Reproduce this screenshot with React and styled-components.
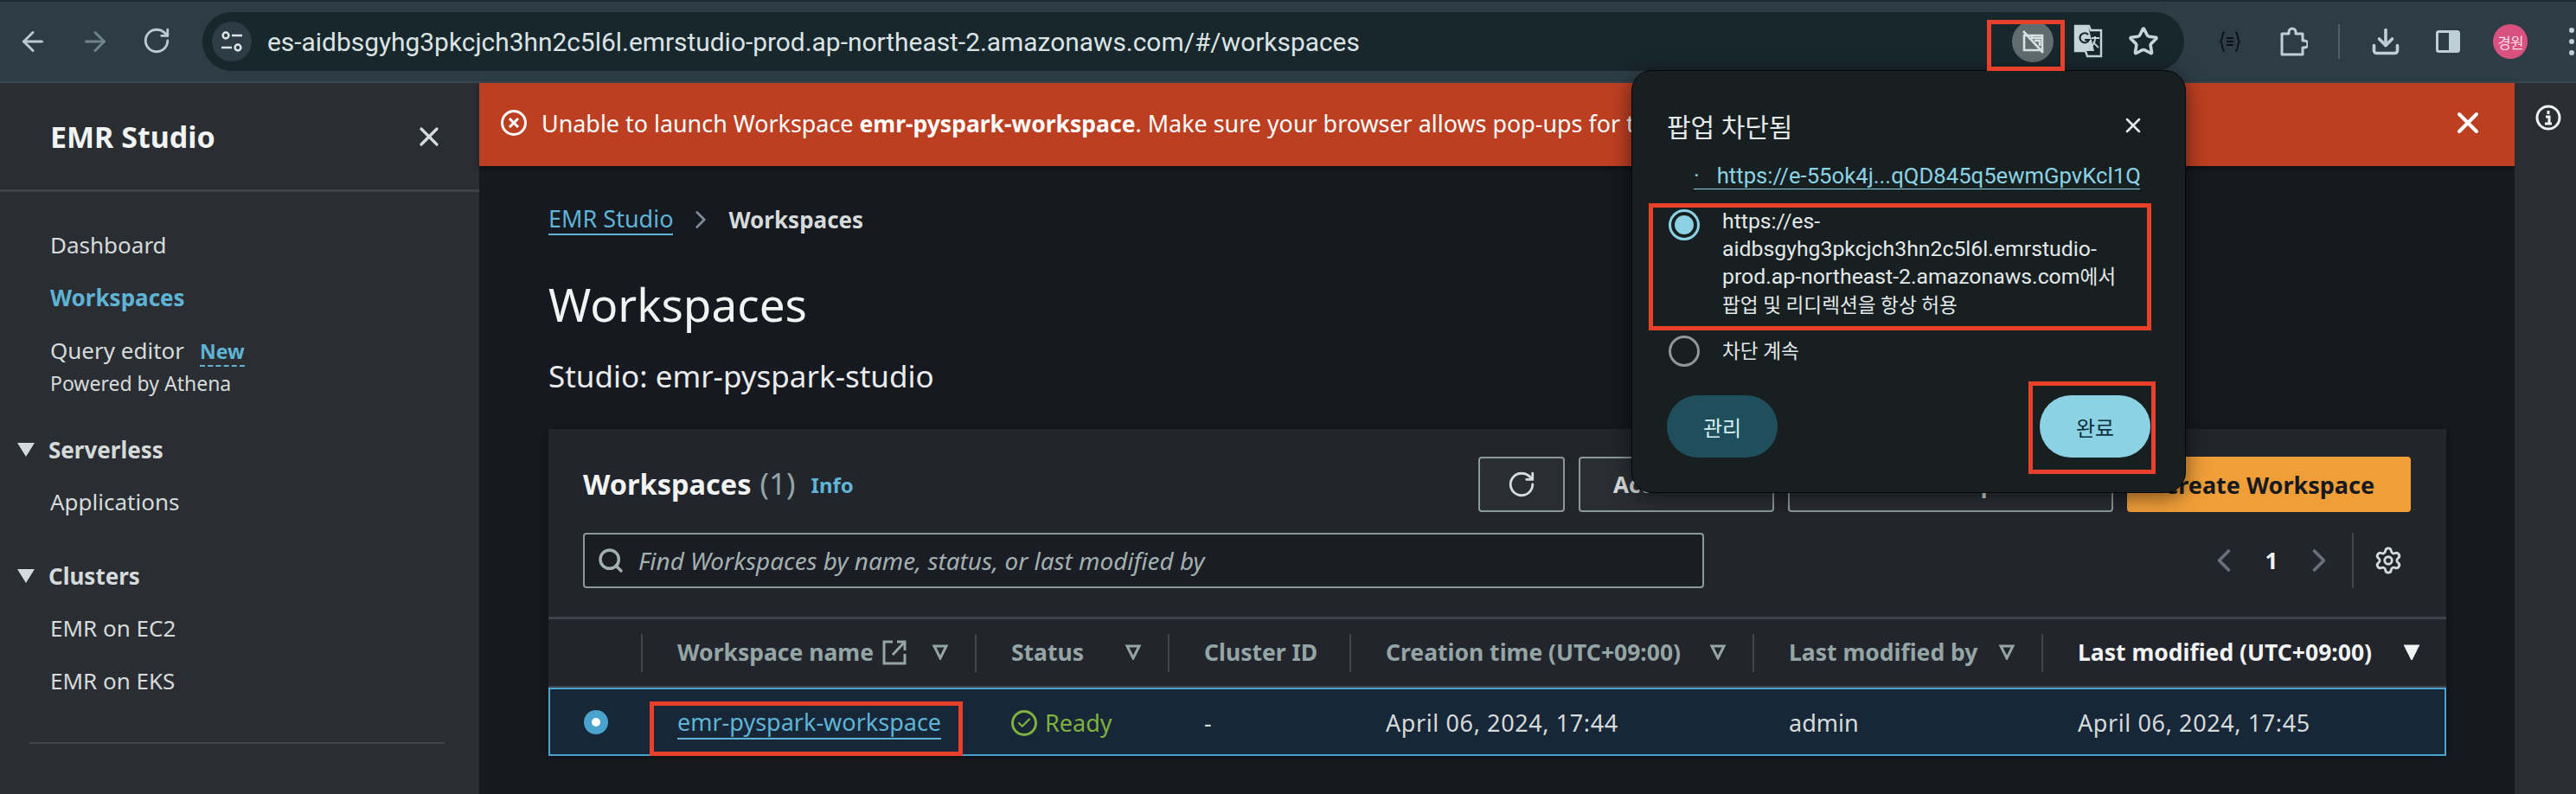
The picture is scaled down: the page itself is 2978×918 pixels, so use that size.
import React from 'react'
import styled, { createGlobalStyle } from 'styled-components'
import { ArrowLeft, ArrowRight, RotateCw, Star, Download, X, Search, Settings, ChevronLeft, ChevronRight, Check } from 'lucide-react'

const GlobalStyle = createGlobalStyle`
  html, body { margin: 0; padding: 0; background: #16191f; }
  * { box-sizing: border-box; }
`

const Page = styled.div`
  position: relative;
  width: 2978px;
  height: 918px;
  overflow: hidden;
  font-family: "Noto Sans", sans-serif;
  font-size: 26px;
  color: #d5dbdb;
`

/* browser chrome */
const BrowserBar = styled.div`
  height: 96px;
  display: flex;
  align-items: center;
  background: #2e3d45;
  border-top: 2px solid #1f2b31;
  border-bottom: 2px solid #3c474d;
  padding-left: 20px;
`
const NavIcons = styled.div`
  flex: none;
  display: flex;
  gap: 36px;
  width: 214px;
`
const NavIcon = styled.span`
  display: flex;
  color: ${p => (p.$dim ? '#70828a' : '#b9cbd0')};
`
const AddressBar = styled.div`
  flex: none;
  width: 2291px;
  height: 68px;
  border-radius: 34px;
  background: #18272c;
  display: flex;
  align-items: center;
  padding-left: 11px;
`
const TuneButton = styled.div`
  flex: none;
  width: 46px;
  height: 46px;
  border-radius: 50%;
  background: #2e3d45;
  display: flex;
  align-items: center;
  justify-content: center;
  color: #dbe5e8;
`
const Url = styled.div`
  flex: none;
  margin-left: 18px;
  width: 2017px;
  font-family: Roboto, sans-serif;
  font-size: 29.9px;
  color: #dbe3e5;
`
const OmniIcons = styled.div`
  flex: none;
  display: flex;
  align-items: center;
  color: #c5d5d9;
`
const BlockedIcon = styled.div`
  width: 48px;
  height: 48px;
  border-radius: 50%;
  background: #5f6c70;
  display: flex;
  align-items: center;
  justify-content: center;
  color: #d6dfe2;
`
const OmniIcon = styled.span`
  display: flex;
  margin-left: ${p => p.$gap}px;
`
const ToolIcons = styled.div`
  flex: none;
  display: flex;
  align-items: center;
  margin-left: 40px;
  color: #bed0d5;
`
const ToolIcon = styled.span`
  display: flex;
  width: ${p => p.$w}px;
  margin-left: ${p => p.$left || 0}px;
  justify-content: center;
`
const ToolDivider = styled.span`
  width: 2px;
  height: 40px;
  background: #4f5f66;
  margin: 0 35px;
`
const Avatar = styled.span`
  width: 40px;
  height: 40px;
  border-radius: 50%;
  background: #d9517f;
  color: #f6dde6;
  font: 17px "Noto Sans CJK KR", sans-serif;
  letter-spacing: -1px;
  display: flex;
  align-items: center;
  justify-content: center;
  margin: 0 48px 0 37px;
`
const Kebab = styled.span`
  display: flex;
  flex-direction: column;
  gap: 7px;
  i { width: 6px; height: 6px; border-radius: 50%; background: #bed0d5; }
`

/* page frame */
const Frame = styled.div`
  display: grid;
  grid-template-columns: 554px 2353px 71px;
  height: 822px;
`
const Sidebar = styled.aside`
  background: #2a2e33;
`
const SideHeader = styled.div`
  height: 126px;
  border-bottom: 3px solid #3f444b;
  display: flex;
  align-items: center;
  justify-content: space-between;
  padding: 0 40px 0 58px;
  margin-bottom: 31px;
`
const SideTitle = styled.div`
  font-size: 34px;
  font-weight: 700;
  color: #f2f3f3;
`
const NavItem = styled.div`
  height: 61px;
  line-height: 61px;
  padding-left: 58px;
  font-weight: ${p => (p.$active ? 700 : 400)};
  color: ${p => (p.$active ? '#5fb4d6' : '#d5dbdb')};
`
const NewTag = styled.span`
  margin-left: 18px;
  font-size: 23px;
  font-weight: 700;
  color: #5fb4d6;
  border-bottom: 2px dashed #5fb4d6;
`
const NavNote = styled.div`
  height: 38px;
  line-height: 38px;
  margin-top: -12px;
  padding-left: 58px;
  font-size: 23px;
  color: #d5dbdb;
`
const NavGroup = styled.div`
  height: 61px;
  margin-top: ${p => p.$top}px;
  display: flex;
  align-items: center;
  gap: 16px;
  padding-left: 20px;
  font-weight: 700;
  color: #d5dbdb;
`
const Caret = styled.span`
  width: 0;
  height: 0;
  border-left: 10px solid transparent;
  border-right: 10px solid transparent;
  border-top: 16px solid #d5dbdb;
`
const SideDivider = styled.div`
  height: 2px;
  margin: 40px 40px 0 34px;
  background: #41464d;
`
const Main = styled.main`
  background: #16191f;
`
const Rail = styled.aside`
  background: #2a2e33;
  padding: 24px 0 0 24px;
  color: #f2f3f3;
`

/* flash banner */
const Banner = styled.div`
  height: 96px;
  background: #bd3f22;
  color: #fff;
  display: flex;
  align-items: center;
  padding: 0 34px 4px 24px;
  white-space: nowrap;
  box-shadow: 0 2px 6px rgba(0, 0, 0, 0.4);
`
const BannerText = styled.div`
  margin-left: 16px;
  flex: 1;
  font-size: 26.9px;
  overflow: hidden;
  b { font-weight: 700; font-size: 26.5px; }
`

const Content = styled.div`
  padding: 42px 79px 0 80px;
`
const Breadcrumbs = styled.div`
  height: 40px;
  display: flex;
  align-items: center;
  gap: 15px;
`
const Crumb = styled.span`
  color: #5fb4d6;
  border-bottom: 2px solid #5fb4d6;
  line-height: 34px;
  font-size: 27px;
`
const CrumbSep = styled.span`
  display: flex;
  color: #7d8998;
`
const CrumbNow = styled.span`
  font-weight: 700;
  color: #d5dbdb;
`
const Heading = styled.h1`
  margin: 43px 0 0;
  height: 70px;
  line-height: 70px;
  font-size: 53px;
  font-weight: 400;
  color: #f2f3f3;
`
const SubHeading = styled.div`
  margin-top: 26px;
  height: 44px;
  line-height: 44px;
  font-size: 35px;
  color: #e9ebed;
`

/* workspaces card */
const Card = styled.section`
  margin-top: 39px;
  background: #22252c;
  box-shadow: 0 2px 8px rgba(0, 0, 0, 0.4);
`
const CardTop = styled.div`
  padding: 32px 41px 33px 40px;
  border-bottom: 3px solid #3e424a;
`
const TitleRow = styled.div`
  height: 64px;
  display: flex;
  align-items: center;
`
const CardTitle = styled.h2`
  margin: 0 0 4px;
  font-size: 32.5px;
  font-weight: 700;
  color: #f2f3f3;
  span { font-weight: 400; font-size: 35px; color: #95a5a6; margin-left: 10px; }
`
const InfoLink = styled.span`
  margin-left: 18px;
  font-size: 24px;
  font-weight: 700;
  color: #5fb4d6;
`
const Actions = styled.div`
  margin-left: auto;
  display: flex;
  gap: 16px;
`
const Button = styled.div`
  width: ${p => p.$w}px;
  height: 64px;
  border: 2px solid #8d9999;
  border-radius: 4px;
  background: #2a2e33;
  color: #d5dbdb;
  font-weight: 700;
  display: flex;
  align-items: center;
  justify-content: ${p => (p.$menu ? 'space-between' : 'center')};
  padding: 0 ${p => (p.$menu ? '38px' : '0')};
`
const PrimaryButton = styled(Button)`
  border: 0;
  background: #f09e38;
  color: #16191f;
  font-size: 27px;
`
const FilterRow = styled.div`
  margin-top: 24px;
  height: 64px;
  display: flex;
  align-items: center;
`
const SearchBox = styled.div`
  width: 1296px;
  height: 64px;
  border: 2px solid #8d9999;
  border-radius: 4px;
  background: #1a1d24;
  display: flex;
  align-items: center;
  gap: 16px;
  padding-left: 14px;
  color: #a3b0b0;
  font-style: italic;
  font-size: 27.9px;
`
const Pager = styled.div`
  margin-left: auto;
  height: 64px;
  display: flex;
  align-items: center;
  color: #687078;
`
const PageNumber = styled.span`
  width: 66px;
  text-align: center;
  font-weight: 700;
  color: #f2f3f3;
`
const PagerDivider = styled.span`
  width: 2px;
  height: 64px;
  margin: 0 23px 0 16px;
  background: #41464d;
`
const GearIcon = styled.span`
  display: flex;
  margin-right: 9px;
  color: #d5dbdb;
`

const COLUMNS = '107px 386px 223px 210px 466px 334px 468px'

const HeadRow = styled.div`
  display: grid;
  grid-template-columns: ${COLUMNS};
  height: 79px;
  align-items: center;
  border-bottom: 2px solid #3e424a;
`
const HeadCell = styled.div`
  height: 44px;
  display: flex;
  align-items: center;
  padding: 0 30px 2px 40px;
  border-left: ${p => (p.$first ? '0' : '2px solid #41464d')};
  font-weight: 700;
  font-size: 26.5px;
  white-space: nowrap;
  color: ${p => (p.$active ? '#f2f3f3' : '#95a5a6')};
`
const SortIcon = styled.svg`
  flex: none;
  margin-left: auto;
  width: 20px;
  height: 18px;
`
const ExternalWrap = styled.span`
  display: flex;
  margin-left: 10px;
  color: #95a5a6;
`
const Row = styled.div`
  display: grid;
  grid-template-columns: ${COLUMNS};
  height: 79px;
  align-items: center;
  background: #182738;
  border: 2px solid #4aa3cc;
`
const Cell = styled.div`
  padding: 2px 0 0 40px;
  display: flex;
  align-items: center;
  color: #d5dbdb;
  font-size: 27px;
  white-space: nowrap;
  letter-spacing: ${p => (p.$date ? '0.6px' : '0')};
`
const RowRadio = styled.span`
  width: 28px;
  height: 28px;
  margin-left: 39px;
  border-radius: 50%;
  background: #4aa3cc;
  display: flex;
  align-items: center;
  justify-content: center;
  &::after { content: ''; width: 10px; height: 10px; border-radius: 50%; background: #fff; }
`
const WorkspaceLink = styled.span`
  color: #5fb4d6;
  border-bottom: 2px solid #5fb4d6;
  line-height: 36px;
`
const StatusOk = styled.span`
  display: flex;
  align-items: center;
  gap: 9px;
  color: #7fb23d;
`
const StatusRing = styled.span`
  width: 30px;
  height: 30px;
  border: 3px solid #7fb23d;
  border-radius: 50%;
  display: flex;
  align-items: center;
  justify-content: center;
`

/* popup bubble */
const Popup = styled.div`
  position: absolute;
  left: 1886px;
  top: 81px;
  width: 641px;
  height: 489px;
  border: 1px solid #050808;
  border-radius: 24px;
  background: #181f20;
  box-shadow: 0 4px 24px rgba(0, 0, 0, 0.55);
  padding: 42px 40px 0;
  font-family: Roboto, "Noto Sans CJK KR", sans-serif;
  color: #e3e8ea;
`
const PopupHead = styled.div`
  height: 42px;
  display: flex;
  align-items: center;
  justify-content: space-between;
  padding-right: 6px;
`
const PopupTitle = styled.div`
  font-size: 30px;
`
const PopupLink = styled.div`
  margin: 20px 12px 0 31px;
  height: 33px;
  line-height: 34px;
  border-bottom: 1px solid #8bd2e4;
  color: #8bd2e4;
  font-size: 25.7px;
  white-space: nowrap;
  overflow: hidden;
  &::before { content: '·'; margin-right: 20px; }
`
const Option = styled.div`
  display: flex;
  align-items: ${p => (p.$center ? 'center' : 'flex-start')};
  font-size: 24.8px;
  line-height: 32px;
  margin-top: ${p => p.$top}px;
  padding-left: 2px;
  width: 580px;
`
const OptionText = styled.div`
  margin-left: 26px;
`
const Hangul = styled.span`
  font-size: 22.6px;
`
const Radio = styled.span`
  flex: none;
  width: 36px;
  height: 36px;
  border-radius: 50%;
  border: 3px solid ${p => (p.$on ? '#8bd2e4' : '#8f9799')};
  margin-top: ${p => (p.$on ? '2px' : '0')};
  display: flex;
  align-items: center;
  justify-content: center;
  &::after {
    content: '';
    width: 22px;
    height: 22px;
    border-radius: 50%;
    background: ${p => (p.$on ? '#8bd2e4' : 'transparent')};
  }
`
const PopupActions = styled.div`
  margin-top: 33px;
  display: flex;
  justify-content: space-between;
`
const PillButton = styled.div`
  width: 128px;
  height: 72px;
  border-radius: 36px;
  background: ${p => (p.$primary ? '#8bd2e4' : '#1f4f5c')};
  color: ${p => (p.$primary ? '#10303a' : '#d9eef3')};
  font-size: 24px;
  display: flex;
  align-items: center;
  justify-content: center;
`

/* red annotation rectangles drawn over the shot */
const Callout = styled.div`
  position: absolute;
  left: ${p => p.$x}px;
  top: ${p => p.$y}px;
  width: ${p => p.$w}px;
  height: ${p => p.$h}px;
  border: 5px solid #e8402a;
  pointer-events: none;
`

const TuneIcon = () => (
  <svg width="28" height="28" viewBox="0 0 28 28" fill="none" stroke="currentColor" strokeWidth="2.5">
    <circle cx="7" cy="7" r="3.4" />
    <path d="M14 7h12M2 21h12" />
    <circle cx="21" cy="21" r="3.4" />
  </svg>
)

const PopupBlockedIcon = () => (
  <svg width="30" height="30" viewBox="0 0 30 30" fill="none" stroke="currentColor" strokeWidth="2.6">
    <path d="M5 8h21v17H5zM14 8v3h12M17 14h6v6" />
    <path d="M4 3l23 25" />
  </svg>
)

const TranslateIcon = () => (
  <svg width="36" height="40" viewBox="0 0 36 40">
    <path d="M3 2h16l2 5h12v30H17l-2-6H3z" fill="none" stroke="#c5d5d9" strokeWidth="2.4" />
    <path d="M3 2h15l7 29H3z" fill="#c5d5d9" />
    <path d="M18 12a5.5 5.5 0 1 0 1 6h-5" fill="none" stroke="#18272c" strokeWidth="2.2" />
    <path d="M22 16h9M26 14v2c0 5-3 9-6 11M24 20c1 3 4 5 6 7" fill="none" stroke="#c5d5d9" strokeWidth="1.8" />
  </svg>
)

const DevIcon = () => (
  <svg width="26" height="28" viewBox="0 0 26 28" fill="none" stroke="#0d1417" strokeWidth="2">
    <path d="M7 3C3 3 5 12 2 14c3 2 1 11 5 11M19 3c4 0 2 9 5 11-3 2-1 11-5 11M9 10h8M9 14h8M9 18h8" />
  </svg>
)

const PuzzleIcon = () => (
  <svg width="36" height="36" viewBox="0 0 36 36" fill="none" stroke="currentColor" strokeWidth="3" strokeLinejoin="round">
    <path d="M6 9h8V7a4 4 0 0 1 8 0v2h8v8h2a4 4 0 0 1 0 8h-2v8H6z" />
  </svg>
)

const PanelIcon = () => (
  <svg width="30" height="30" viewBox="0 0 30 30">
    <rect x="2.5" y="3.5" width="25" height="23" rx="2" fill="none" stroke="currentColor" strokeWidth="3" />
    <rect x="16" y="3.5" width="11.5" height="23" fill="currentColor" />
  </svg>
)

const ErrorIcon = () => (
  <svg width="32" height="32" viewBox="0 0 32 32" fill="none" stroke="#fff" strokeWidth="3">
    <circle cx="16" cy="16" r="13.5" />
    <path d="M11 11l10 10M21 11L11 21" />
  </svg>
)

const InfoIcon = () => (
  <svg width="30" height="32" viewBox="0 0 30 32" fill="none" stroke="currentColor" strokeWidth="3">
    <circle cx="15" cy="16" r="13" />
    <path d="M15 8v4M12 15h4v8M11 23h8" />
  </svg>
)

const ExternalIcon = () => (
  <svg width="28" height="30" viewBox="0 0 28 30" fill="none" stroke="currentColor" strokeWidth="3">
    <path d="M12 3H2v25h24V17M17 3h9v10M26 3L12 18" />
  </svg>
)

const SortArrow = ({ active }) => (
  <SortIcon viewBox="0 0 20 18" fill={active ? 'currentColor' : 'none'} stroke="currentColor" strokeWidth="3">
    <path d="M3 2h14l-7 14z" />
  </SortIcon>
)

const columns = [
  { label: 'Workspace name', external: true, sort: true },
  { label: 'Status', sort: true },
  { label: 'Cluster ID' },
  { label: 'Creation time (UTC+09:00)', sort: true },
  { label: 'Last modified by', sort: true },
  { label: 'Last modified (UTC+09:00)', sort: true, active: true },
]

const App = () => {
  return (
    <Page>
      <GlobalStyle />
      <BrowserBar>
        <NavIcons>
          <NavIcon><ArrowLeft size={36} /></NavIcon>
          <NavIcon $dim><ArrowRight size={36} /></NavIcon>
          <NavIcon><RotateCw size={34} /></NavIcon>
        </NavIcons>
        <AddressBar>
          <TuneButton><TuneIcon /></TuneButton>
          <Url>es-aidbsgyhg3pkcjch3hn2c5l6l.emrstudio-prod.ap-northeast-2.amazonaws.com/#/workspaces</Url>
          <OmniIcons>
            <BlockedIcon><PopupBlockedIcon /></BlockedIcon>
            <OmniIcon $gap={22}><TranslateIcon /></OmniIcon>
            <OmniIcon $gap={28}><Star size={36} strokeWidth={2.4} /></OmniIcon>
          </OmniIcons>
        </AddressBar>
        <ToolIcons>
          <ToolIcon $w={26}><DevIcon /></ToolIcon>
          <ToolIcon $w={36} $left={41}><PuzzleIcon /></ToolIcon>
          <ToolDivider />
          <ToolIcon $w={36}><Download size={36} strokeWidth={2.4} /></ToolIcon>
          <ToolIcon $w={30} $left={39}><PanelIcon /></ToolIcon>
          <Avatar>경원</Avatar>
          <Kebab><i /><i /><i /></Kebab>
        </ToolIcons>
      </BrowserBar>

      <Frame>
        <Sidebar>
          <SideHeader>
            <SideTitle>EMR Studio</SideTitle>
            <X size={36} strokeWidth={2.2} color="#d5dbdb" />
          </SideHeader>
          <NavItem>Dashboard</NavItem>
          <NavItem $active>Workspaces</NavItem>
          <NavItem>Query editor<NewTag>New</NewTag></NavItem>
          <NavNote>Powered by Athena</NavNote>
          <NavGroup $top={27}><Caret />Serverless</NavGroup>
          <NavItem>Applications</NavItem>
          <NavGroup $top={24}><Caret />Clusters</NavGroup>
          <NavItem>EMR on EC2</NavItem>
          <NavItem>EMR on EKS</NavItem>
          <SideDivider />
        </Sidebar>

        <Main>
          <Banner>
            <ErrorIcon />
            <BannerText>
              Unable to launch Workspace <b>emr-pyspark-workspace</b>. Make sure your browser allows pop-ups for this site.
            </BannerText>
            <X size={40} strokeWidth={2.4} />
          </Banner>
          <Content>
            <Breadcrumbs>
              <Crumb>EMR Studio</Crumb>
              <CrumbSep><ChevronRight size={34} strokeWidth={2} /></CrumbSep>
              <CrumbNow>Workspaces</CrumbNow>
            </Breadcrumbs>
            <Heading>Workspaces</Heading>
            <SubHeading>Studio: emr-pyspark-studio</SubHeading>
            <Card>
              <CardTop>
                <TitleRow>
                  <CardTitle>Workspaces<span>(1)</span></CardTitle>
                  <InfoLink>Info</InfoLink>
                  <Actions>
                    <Button $w={100}><RotateCw size={34} /></Button>
                    <Button $w={226} $menu>Actions<Caret /></Button>
                    <Button $w={376} $menu>Launch Workspace<Caret /></Button>
                    <PrimaryButton $w={328}>Create Workspace</PrimaryButton>
                  </Actions>
                </TitleRow>
                <FilterRow>
                  <SearchBox>
                    <Search size={32} color="#a3b0b0" strokeWidth={2.6} />
                    Find Workspaces by name, status, or last modified by
                  </SearchBox>
                  <Pager>
                    <ChevronLeft size={44} strokeWidth={2} />
                    <PageNumber>1</PageNumber>
                    <ChevronRight size={44} strokeWidth={2} />
                    <PagerDivider />
                    <GearIcon><Settings size={34} /></GearIcon>
                  </Pager>
                </FilterRow>
              </CardTop>
              <HeadRow>
                <HeadCell $first />
                {columns.map(col => (
                  <HeadCell key={col.label} $active={col.active}>
                    {col.label}
                    {col.external && <ExternalWrap><ExternalIcon /></ExternalWrap>}
                    {col.sort && <SortArrow active={col.active} />}
                  </HeadCell>
                ))}
              </HeadRow>
              <Row>
                <RowRadio />
                <Cell><WorkspaceLink>emr-pyspark-workspace</WorkspaceLink></Cell>
                <Cell>
                  <StatusOk>
                    <StatusRing><Check size={18} strokeWidth={3} /></StatusRing>
                    Ready
                  </StatusOk>
                </Cell>
                <Cell>-</Cell>
                <Cell $date>April 06, 2024, 17:44</Cell>
                <Cell>admin</Cell>
                <Cell $date>April 06, 2024, 17:45</Cell>
              </Row>
            </Card>
          </Content>
        </Main>

        <Rail><InfoIcon /></Rail>
      </Frame>

      <Popup>
        <PopupHead>
          <PopupTitle>팝업 차단됨</PopupTitle>
          <X size={28} strokeWidth={2.2} />
        </PopupHead>
        <PopupLink>https://e-55ok4j...qQD845q5ewmGpvKcl1Q</PopupLink>
        <Option $top={21}>
          <Radio $on />
          <OptionText>
            https://es-<br />
            aidbsgyhg3pkcjch3hn2c5l6l.emrstudio-<br />
            prod.ap-northeast-2.amazonaws.com<Hangul>에서</Hangul><br />
            <Hangul>팝업 및 리디렉션을 항상 허용</Hangul>
          </OptionText>
        </Option>
        <Option $top={18} $center>
          <Radio />
          <OptionText><Hangul>차단 계속</Hangul></OptionText>
        </Option>
        <PopupActions>
          <PillButton>관리</PillButton>
          <PillButton $primary>완료</PillButton>
        </PopupActions>
      </Popup>

      <Callout $x={2297} $y={23} $w={90} $h={59} />
      <Callout $x={1906} $y={235} $w={581} $h={147} />
      <Callout $x={2345} $y={441} $w={147} $h={107} />
      <Callout $x={751} $y={811} $w={362} $h={63} />
    </Page>
  )
}

export default App
